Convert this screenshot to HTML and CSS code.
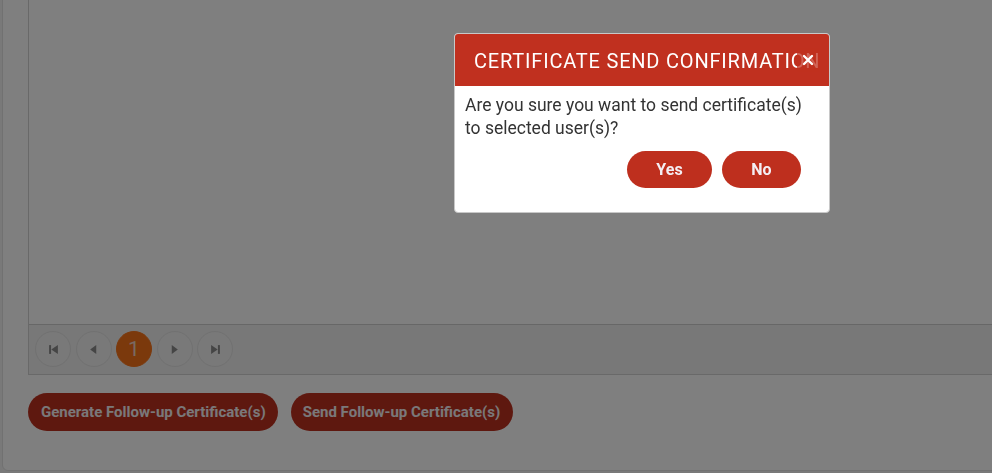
FILE: index.html
```html
<!DOCTYPE html>
<html lang="en">
<head>
<meta charset="utf-8">
<title>Certificates</title>
<link rel="stylesheet" href="styles.css">
</head>
<body>
<div class="page">
  <div class="grid">
    <div class="grid-body"></div>
    <div class="pager">
      <button class="pg" aria-label="First page">
        <svg width="11" height="11" viewBox="0 0 10 10"><rect x="1" y="1" width="1.8" height="8" fill="currentColor"/><polygon points="9,1 9,9 3,5" fill="currentColor"/></svg>
      </button>
      <button class="pg" aria-label="Previous page">
        <svg width="11" height="11" viewBox="0 0 10 10"><polygon points="7.5,1 7.5,9 2,5" fill="currentColor"/></svg>
      </button>
      <button class="pg active">1</button>
      <button class="pg" aria-label="Next page">
        <svg width="11" height="11" viewBox="0 0 10 10"><polygon points="2.5,1 2.5,9 8,5" fill="currentColor"/></svg>
      </button>
      <button class="pg" aria-label="Last page">
        <svg width="11" height="11" viewBox="0 0 10 10"><polygon points="1,1 1,9 7,5" fill="currentColor"/><rect x="7.2" y="1" width="1.8" height="8" fill="currentColor"/></svg>
      </button>
    </div>
  </div>
  <div class="actions">
    <button class="btn">Generate Follow-up Certificate(s)</button>
    <button class="btn">Send Follow-up Certificate(s)</button>
  </div>
</div>

<div class="overlay"></div>

<div class="dialog">
  <div class="dlg-head">
    <div class="dlg-title">CERTIFICATE SEND CONFIRMATION</div>
    <button class="dlg-close" aria-label="Close">
      <svg width="12" height="12" viewBox="0 0 12 12"><path d="M2 2 L10 10 M10 2 L2 10" stroke="currentColor" stroke-width="2.4" stroke-linecap="round"/></svg>
    </button>
  </div>
  <div class="dlg-body">
    <p class="dlg-text">Are you sure you want to send certificate(s) to selected user(s)?</p>
    <div class="dlg-buttons">
      <button class="dbtn yes">Yes</button>
      <button class="dbtn no">No</button>
    </div>
  </div>
</div>
</body>
</html>
```

FILE: styles.css
```css
* { box-sizing: border-box; }
html, body {
  margin: 0;
  height: 100%;
  overflow: hidden;
}
body {
  background: #f2f2f2;
  font-family: Roboto, "Liberation Sans", Arial, sans-serif;
}
.page {
  margin: -20px -20px 0 2px;
  background: #ffffff;
  border: 1px solid #e2e2e2;
  border-radius: 6px;
  padding: 0 0 39px 25px;
}
.grid {
  border: 1px solid #d2d2d2;
  border-right: none;
}
.grid-body {
  height: 343px;
  border-bottom: 1px solid #cfcfcf;
  background: #ffffff;
}
.pager {
  display: flex;
  gap: 4.5px;
  padding: 6px 6px 7px 6px;
  background: #f0f0f0;
}
.pg {
  width: 36px;
  height: 36px;
  border-radius: 50%;
  border: 1px solid #e2e2e2;
  background: #f2f2f2;
  color: #8a8a8a;
  padding: 0;
  display: flex;
  align-items: center;
  justify-content: center;
  font-family: Roboto, "Liberation Sans", Arial, sans-serif;
}
.pg.active {
  background: #f77319;
  border-color: #f77319;
  color: #f2d4c2;
  font-size: 21px;
}
.actions {
  display: flex;
  gap: 13px;
  margin-top: 18px;
}
.btn {
  height: 38px;
  border: none;
  border-radius: 19px;
  background: #bd311f;
  color: #f4f0f4;
  font-family: Roboto, "Liberation Sans", Arial, sans-serif;
  font-weight: 700;
  font-size: 15px;
  padding: 0 12px 0 13px;
}
.btn + .btn { padding: 0 13px 0 12px; }

.overlay {
  position: fixed;
  inset: 0;
  background: rgba(0, 0, 0, 0.5);
}
.dialog {
  position: fixed;
  left: 454px;
  top: 33px;
  width: 376px;
  height: 180px;
  background: #ffffff;
  border: 1px solid #c8c8c8;
  border-radius: 4px;
  overflow: hidden;
}
.dlg-head {
  position: relative;
  height: 52px;
  background: #c0301f;
  padding: 0 11px 0 19px;
  display: flex;
  align-items: center;
}
.dlg-title {
  color: #ffffff;
  font-size: 20px;
  letter-spacing: 0.8px;
  white-space: nowrap;
  overflow: hidden;
  padding-top: 1px;
}
.dlg-close {
  position: absolute;
  right: 10px;
  top: 14px;
  width: 22px;
  height: 24px;
  border: none;
  padding: 0;
  background: rgba(192, 48, 31, 0.75);
  color: #ffffff;
  display: flex;
  align-items: center;
  justify-content: center;
}
.dlg-body {
  padding: 8px 20px 0 10px;
}
.dlg-text {
  margin: 0;
  font-size: 17.5px;
  line-height: 23px;
  color: #333333;
}
.dlg-buttons {
  display: flex;
  justify-content: flex-end;
  gap: 10px;
  margin-top: 11px;
  padding-right: 8px;
}
.dbtn {
  height: 37px;
  border: none;
  border-radius: 19px;
  background: #be2f1e;
  color: #f4eef4;
  font-family: Roboto, "Liberation Sans", Arial, sans-serif;
  font-weight: 700;
  font-size: 16px;
}
.dbtn.yes { width: 85px; }
.dbtn.no { width: 79px; }
```
